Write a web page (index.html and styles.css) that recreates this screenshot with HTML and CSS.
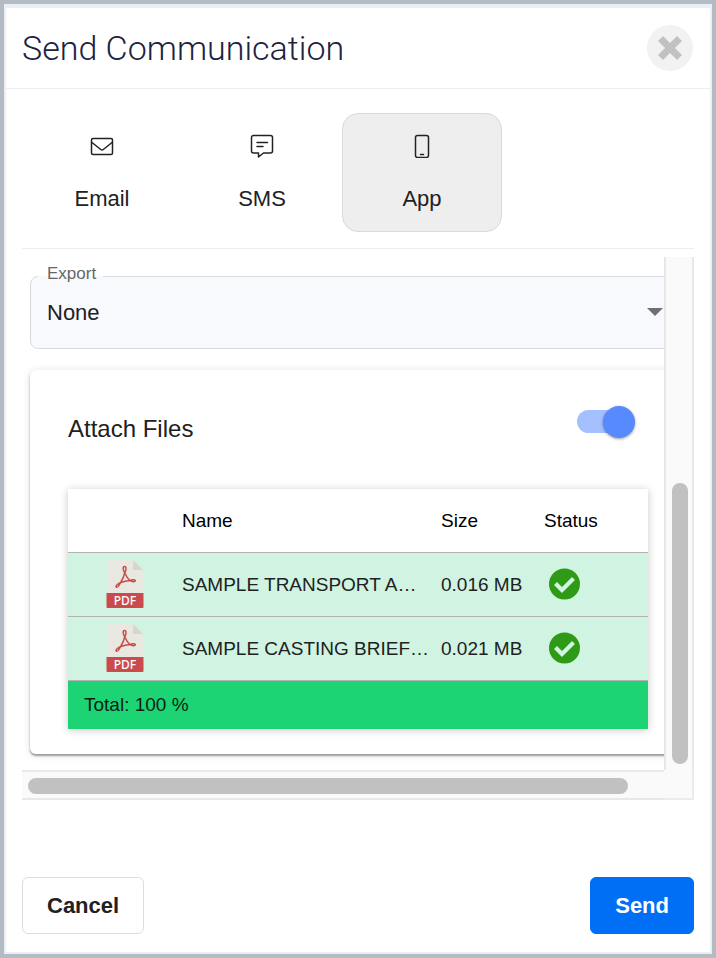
FILE: index.html
```html
<!DOCTYPE html>
<html lang="en">
<head>
<meta charset="utf-8">
<meta name="viewport" content="width=device-width, initial-scale=1">
<title>Send Communication</title>
<link rel="stylesheet" href="styles.css">
</head>
<body>
<svg class="defs" aria-hidden="true">
  <symbol id="pdf" viewBox="0 0 38 48">
    <path fill="#e8e8e0" d="M1 0h26l10 10v24H1z"/>
    <path fill="#d8d6cb" d="M27 0l10 10H27z"/>
    <path fill="none" stroke="#cb4b4c" stroke-width="1.500" stroke-linejoin="round" d="M18.800 13c-1.800-3-2.300-6.500-.3-6.500s1.900 3.500.3 6.500c1.500 3.500 3.200 6 5.200 7.500 2-.9 5.200-1.400 5.300.1.100 1.600-3.300 1.300-5.300-.1-3.200.2-6.400.9-9.300 2-1.400 2.700-3.400 5.200-4.400 4.700-1.200-.8 1.400-3.300 4.400-4.700 1.700-2.900 3.200-6.200 4.100-9.500z"/>
    <path fill="#cb4b4c" d="M.5 33h37v14a1 1 0 0 1-1 1h-35a1 1 0 0 1-1-1z"/>
  </symbol>
  <symbol id="check" viewBox="0 0 32 32">
    <circle cx="15.500" cy="16" r="15.500" fill="#2f9a16"/>
    <path fill="none" stroke="#d0f4e1" stroke-width="4.200" d="M6.500 15.500l6.500 6.500 11.500-11.500"/>
  </symbol>
</svg>
<main class="dialog">
  <header class="header">
    <h1 class="title">Send Communication</h1>
    <button class="close" type="button" aria-label="Close">
      <svg width="24" height="24" viewBox="0 0 24 24"><path d="M2.500 2.500l19 19M21.500 2.500l-19 19" stroke="#c1c1c1" stroke-width="7"/></svg>
    </button>
  </header>
  <nav class="tabs">
    <button class="tab" type="button">
      <svg class="tab-icon" viewBox="0 0 24 24"><rect x="1.500" y="4.500" width="21" height="16" rx="1.500"/><path d="M2 8.500l8.700 7q1.300 1 2.600 0l8.700-7"/></svg>
      <span>Email</span>
    </button>
    <button class="tab" type="button">
      <svg class="tab-icon" viewBox="0 0 24 24"><path d="M3.500 1.500h17a2 2 0 0 1 2 2v13.500a2 2 0 0 1-2 2h-7L8.500 23v-4h-5a2 2 0 0 1-2-2V3.500a2 2 0 0 1 2-2zM7 8.500h10.500M7 12.500h6"/></svg>
      <span>SMS</span>
    </button>
    <button class="tab selected" type="button">
      <svg class="tab-icon" viewBox="0 0 24 24"><rect x="5.500" y="1.500" width="13" height="22" rx="2"/><path d="M10.500 20.500h3"/></svg>
      <span>App</span>
    </button>
  </nav>
  <div class="scroll">
    <div class="viewport">
      <div class="content">
        <div class="field">
          <label class="field-label" for="export">Export</label>
          <select class="select" id="export"><option>None</option></select>
        </div>
        <section class="card">
          <div class="card-head">
            <label for="attach">Attach Files</label>
            <input class="toggle" id="attach" type="checkbox" role="switch" checked>
          </div>
          <table class="files">
            <colgroup><col class="col-icon"><col><col class="col-size"><col class="col-status"></colgroup>
            <thead><tr><th></th><th>Name</th><th>Size</th><th>Status</th></tr></thead>
            <tbody>
              <tr><td class="file-icon"><svg width="38" height="48"><use href="#pdf"/><text class="pdf-text" x="19" y="45" text-anchor="middle">PDF</text></svg></td><td class="name">SAMPLE TRANSPORT A…</td><td>0.016 MB</td><td class="status"><svg width="32" height="32"><use href="#check"/></svg></td></tr>
              <tr><td class="file-icon"><svg width="38" height="48"><use href="#pdf"/><text class="pdf-text" x="19" y="45" text-anchor="middle">PDF</text></svg></td><td class="name">SAMPLE CASTING BRIEF…</td><td>0.021 MB</td><td class="status"><svg width="32" height="32"><use href="#check"/></svg></td></tr>
            </tbody>
            <tfoot><tr><td colspan="4">Total: 100 %</td></tr></tfoot>
          </table>
        </section>
      </div>
    </div>
    <div class="track vertical"><div class="thumb"></div></div>
    <div class="track horizontal"><div class="thumb"></div></div>
    <div class="corner"></div>
  </div>
  <footer class="footer">
    <button class="btn" type="button">Cancel</button>
    <button class="btn primary" type="button">Send</button>
  </footer>
</main>
</body>
</html>
```

FILE: styles.css
```css
* { box-sizing: border-box; }

body {
  margin: 0;
  min-height: 100vh;
  display: flex;
  border: 4px solid #b3bcc2;
  font-family: "Liberation Sans", Arial, sans-serif;
  color: #212121;
  background: #fff;
}

button, select { font: inherit; color: inherit; cursor: pointer; }

.defs { position: absolute; width: 0; height: 0; }

.dialog {
  flex: 1;
  min-width: 0;
  display: flex;
  flex-direction: column;
  border: 2px solid #ebeff4;
  border-top-width: 4px;
}

.header {
  display: flex;
  align-items: center;
  justify-content: space-between;
  height: 81px;
  padding: 0 17px 0 16px;
  border-bottom: 1px solid #ebedf3;
}

.title {
  margin: 0;
  font-family: Roboto, "Liberation Sans", sans-serif;
  font-size: 34px;
  font-weight: 300;
  color: #1c2340;
}

.close {
  display: grid;
  place-items: center;
  width: 46px;
  height: 46px;
  padding: 0;
  border: 0;
  border-radius: 50%;
  background: #f2f2f2;
}

.tabs {
  display: flex;
  margin: 0 16px;
  padding: 24px 0 16px;
  border-bottom: 1px solid #ededed;
}

.tab {
  display: flex;
  flex-direction: column;
  align-items: center;
  gap: 27px;
  width: 160px;
  height: 119px;
  padding: 20px 0 0;
  border: 1px solid transparent;
  border-radius: 16px;
  background: none;
  font-size: 22px;
  line-height: 28px;
}

.tab.selected { border-color: #dadada; background: #eee; }

.tab-icon {
  width: 24px;
  height: 24px;
  fill: none;
  stroke: #222;
  stroke-width: 1.500;
  stroke-linejoin: round;
  stroke-linecap: round;
}

.scroll {
  display: grid;
  grid-template-columns: minmax(0, 1fr) 30px;
  grid-template-rows: auto 30px;
  margin: 8px 16px 0;
}

.viewport { overflow: hidden; }

.content { width: calc(100% + 30px); padding: 19px 8px 16px; }

.field { position: relative; margin-bottom: 21px; }

.field-label {
  position: absolute;
  top: -12px;
  left: 8px;
  padding: 0 7px 0 9px;
  font-size: 17px;
  line-height: 20px;
  color: #666;
  background: linear-gradient(#fff 12px, #f8f9fd 12px);
}

.select {
  display: block;
  width: 100%;
  height: 73px;
  padding: 0 16px;
  appearance: none;
  border: 1px solid #d9dadf;
  border-radius: 8px;
  background: #f8f9fd;
  font-size: 22px;
}

.field::after {
  content: "";
  position: absolute;
  top: 32px;
  right: 23px;
  border: 8px solid transparent;
  border-top-color: #707070;
  border-bottom: 0;
  pointer-events: none;
}

.card {
  padding: 36px 38px 25px;
  border-radius: 6px;
  background: #fff;
  box-shadow: 0 2px 2px rgba(0, 0, 0, .35), 0 1px 8px rgba(0, 0, 0, .12);
}

.card-head {
  display: flex;
  align-items: flex-start;
  justify-content: space-between;
  padding-right: 13px;
  margin-bottom: 46px;
  font-size: 24px;
  line-height: 28px;
}

.card-head label { padding-top: 9px; }

.toggle {
  position: relative;
  width: 58px;
  height: 32px;
  margin: 0;
  appearance: none;
}

.toggle::before {
  content: "";
  position: absolute;
  inset: 4px 4px 5px 0;
  border-radius: 12px;
  background: #a5c0ff;
}

.toggle::after {
  content: "";
  position: absolute;
  right: 0;
  width: 32px;
  height: 32px;
  border-radius: 50%;
  background: #588aff;
  box-shadow: 0 1px 3px rgba(0, 0, 0, .4);
}

.files {
  width: 100%;
  table-layout: fixed;
  border-spacing: 0;
  font-size: 19px;
  box-shadow: 0 1px 8px rgba(0, 0, 0, .22);
}

.col-icon { width: 114px; }
.col-size { width: 103px; }
.col-status { width: 104px; }

.files th, .files td {
  height: 64px;
  padding: 0;
  border-bottom: 1px solid #b3b3b3;
  text-align: left;
  white-space: nowrap;
}

.files th { font-weight: 400; color: #000; }
.files tbody { background: #d0f4e1; }
.files .file-icon { padding-bottom: 2px; text-align: center; }
.files .name { overflow: hidden; text-overflow: ellipsis; }
.files .status { padding: 0 0 2px 5px; }
.files svg { display: inline-block; vertical-align: middle; }

.files tfoot td {
  height: 48px;
  padding-left: 16px;
  border: 0;
  color: #0b1f14;
  background: #1cd474;
}

.pdf-text {
  font: 500 12px "Noto Sans", sans-serif;
  fill: #fff;
}

.track { display: flex; background: #fafafa; }

.vertical {
  align-items: flex-end;
  padding: 6px 4px 6px 6px;
  border: solid #e8e8e8;
  border-width: 0 2px;
}

.vertical .thumb { width: 100%; height: 56%; }

.horizontal {
  padding: 6px 4px 4px 6px;
  border: solid #e8e8e8;
  border-width: 2px 0;
}

.horizontal .thumb { width: 95%; }

.thumb { border-radius: 8px; background: #c1c1c1; }

.corner {
  border: solid #ebebeb;
  border-width: 0 2px 2px 0;
  background: #fafafa;
}

.footer {
  display: flex;
  justify-content: space-between;
  margin-top: auto;
  padding: 16px 16px 18px;
}

.btn {
  height: 57px;
  padding: 0 24px;
  border: 1px solid #dedede;
  border-radius: 6px;
  background: #fff;
  font-size: 22px;
  font-weight: 700;
}

.btn.primary { border-color: #006ff5; color: #fff; background: #006ff5; }
```
